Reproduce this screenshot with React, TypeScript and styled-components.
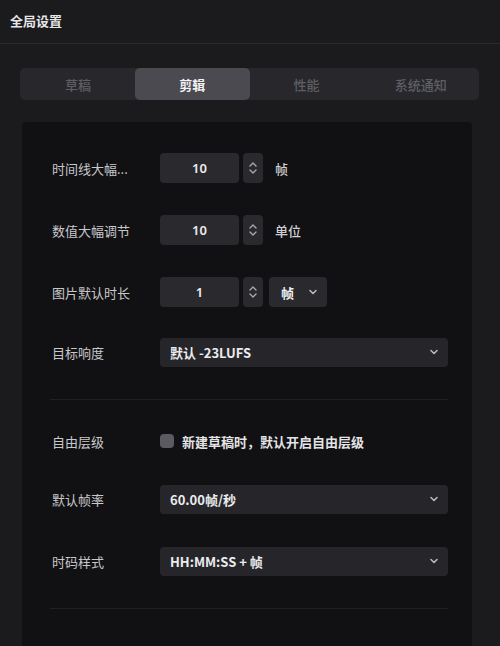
import React from "react";
import styled, { createGlobalStyle } from "styled-components";

const Global = createGlobalStyle`
  html, body { margin: 0; padding: 0; background: #1b1b1e; }
  body { font-family: "Noto Sans CJK SC", "Noto Sans", sans-serif; color: #d8d8da; }
  * { box-sizing: border-box; }
`;

const Page = styled.div`
  width: 500px;
  height: 646px;
  background: #1b1b1e;
  overflow: hidden;
  display: flex;
  flex-direction: column;
`;

const Header = styled.div`
  height: 44px;
  padding: 0 10px;
  display: flex;
  align-items: center;
  font-size: 13px;
  font-weight: 700;
  color: #e6e6e8;
  border-bottom: 1px solid #2a2a2e;
  padding-bottom: 2px;
`;

const Body = styled.div`
  padding: 24px 20px 0 20px;
  display: flex;
  flex-direction: column;
  flex: 1;
`;

const Tabs = styled.div`
  height: 32px;
  background: #28282c;
  border-radius: 5px;
  display: grid;
  grid-template-columns: repeat(4, 1fr);
  padding: 0 1px;
  margin-right: 1px;
`;

const Tab = styled.div<{ $active?: boolean }>`
  display: flex;
  align-items: center;
  justify-content: center;
  font-size: 13px;
  font-weight: ${(p) => (p.$active ? 700 : 500)};
  color: ${(p) => (p.$active ? "#f2f2f4" : "#5e5e64")};
  background: ${(p) => (p.$active ? "#4a4a50" : "transparent")};
  border-radius: 5px;
`;

const Panel = styled.div`
  margin-top: 22px;
  margin-left: 2px;
  margin-right: 8px;
  flex: 1;
  background: #111113;
  border-radius: 4px 4px 0 0;
  padding: 31px 24px 0 30px;
  display: flex;
  flex-direction: column;
`;

const Row = styled.div<{ $gap?: number }>`
  height: 30px;
  display: flex;
  align-items: center;
  margin-bottom: ${(p) => p.$gap ?? 32}px;
`;

const Label = styled.div`
  width: 108px;
  font-size: 13px;
  color: #c8c8cc;
  white-space: nowrap;
`;

const NumBox = styled.div`
  width: 79px;
  height: 30px;
  background: #2a2a2e;
  border-radius: 4px;
  display: flex;
  align-items: center;
  justify-content: center;
  font-family: "Noto Sans", sans-serif;
  font-size: 13px;
  font-weight: 600;
  color: #ececee;
`;

const Stepper = styled.div`
  width: 20px;
  height: 30px;
  margin-left: 4px;
  background: #2a2a2e;
  border-radius: 4px;
  display: flex;
  align-items: center;
  justify-content: center;
`;

const Unit = styled.div`
  margin-left: 12px;
  font-size: 13px;
  color: #d0d0d4;
  font-weight: 500;
`;

const SmallSelect = styled.div`
  width: 58px;
  height: 30px;
  margin-left: 6px;
  background: #2a2a2e;
  border-radius: 4px;
  display: flex;
  align-items: center;
  justify-content: space-between;
  padding: 0 8px 0 12px;
  font-size: 13px;
  font-weight: 700;
  color: #f0f0f2;
`;

const Select = styled.div`
  flex: 1;
  height: 29px;
  background: #26262a;
  border-radius: 4px;
  display: flex;
  align-items: center;
  justify-content: space-between;
  padding: 0 8px 0 10px;
  font-size: 13px;
  font-weight: 700;
  color: #ececee;
`;

const Divider = styled.div<{ $mt: number; $mb: number }>`
  height: 1px;
  background: #212124;
  margin: ${(p) => p.$mt}px 0 ${(p) => p.$mb}px -2px;
`;

const Check = styled.div`
  width: 14px;
  height: 14px;
  border-radius: 4px;
  background: #5a5a60;
  margin-right: 8px;
`;

const CheckText = styled.div`
  font-size: 13px;
  font-weight: 700;
  color: #e4e4e6;
`;

const Chevron = () => (
  <svg width="12" height="12" viewBox="0 0 12 12" fill="none">
    <path d="M3 4.5 L6 7.5 L9 4.5" stroke="#b8b8bc" strokeWidth="1.6" strokeLinecap="round" strokeLinejoin="round" />
  </svg>
);

const UpDown = () => (
  <svg width="10" height="16" viewBox="0 0 10 16" fill="none">
    <path d="M2 6 L5 3 L8 6" stroke="#a8a8ac" strokeWidth="1.4" strokeLinecap="round" strokeLinejoin="round" />
    <path d="M2 10 L5 13 L8 10" stroke="#a8a8ac" strokeWidth="1.4" strokeLinecap="round" strokeLinejoin="round" />
  </svg>
);

export default function App() {
  return (
    <Page>
      <Global />
      <Header>全局设置</Header>
      <Body>
        <Tabs>
          <Tab>草稿</Tab>
          <Tab $active>剪辑</Tab>
          <Tab>性能</Tab>
          <Tab>系统通知</Tab>
        </Tabs>
        <Panel>
          <Row>
            <Label>时间线大幅...</Label>
            <NumBox>10</NumBox>
            <Stepper><UpDown /></Stepper>
            <Unit>帧</Unit>
          </Row>
          <Row>
            <Label>数值大幅调节</Label>
            <NumBox>10</NumBox>
            <Stepper><UpDown /></Stepper>
            <Unit>单位</Unit>
          </Row>
          <Row $gap={30}>
            <Label>图片默认时长</Label>
            <NumBox>1</NumBox>
            <Stepper><UpDown /></Stepper>
            <SmallSelect>帧<Chevron /></SmallSelect>
          </Row>
          <Row $gap={0}>
            <Label>目标响度</Label>
            <Select>默认 -23LUFS<Chevron /></Select>
          </Row>
          <Divider $mt={32} $mb={26} />
          <Row $gap={28}>
            <Label>自由层级</Label>
            <Check />
            <CheckText>新建草稿时，默认开启自由层级</CheckText>
          </Row>
          <Row>
            <Label>默认帧率</Label>
            <Select>60.00帧/秒<Chevron /></Select>
          </Row>
          <Row $gap={0}>
            <Label>时码样式</Label>
            <Select>HH:MM:SS + 帧<Chevron /></Select>
          </Row>
          <Divider $mt={32} $mb={0} />
        </Panel>
      </Body>
    </Page>
  );
}
